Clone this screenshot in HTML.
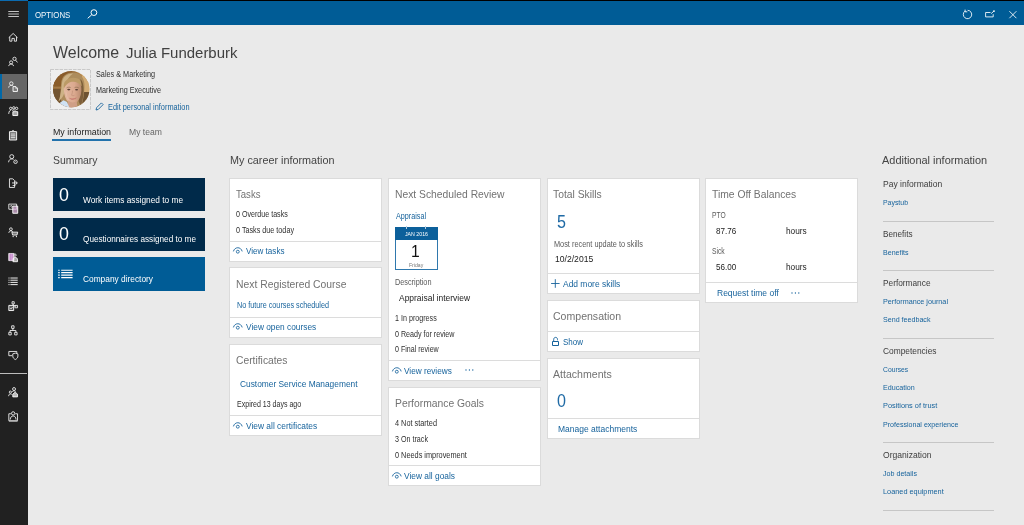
<!DOCTYPE html>
<html lang="en"><head><meta charset="utf-8"><title>Employee self service</title>
<style>
html,body{margin:0;padding:0}
body{width:1024px;height:525px;overflow:hidden;position:relative;background:#eaeaea;font-family:"Liberation Sans",sans-serif}
.t{position:absolute;display:inline-block;transform-origin:0 50%;white-space:pre;font-family:"Liberation Sans",sans-serif}
.b{position:absolute;box-sizing:border-box}
.card{position:absolute;box-sizing:border-box;background:#fff;border:1px solid #dbdbdb}
.hr{position:absolute;height:1px;background:#dcdcdc}
.sep{position:absolute;height:1px;background:#c6c6c6;left:883px;width:111px}
svg{position:absolute;overflow:visible}

</style></head>
<body>
<!-- top strip + header -->
<div class="b" style="left:0;top:0;width:1024px;height:1px;background:#000"></div>
<div class="b" style="left:0;top:0;width:28px;height:1px;background:#0b6bb0"></div>
<div class="b" style="left:28px;top:1px;width:996px;height:24.4px;background:#005c96"></div>
<!-- sidebar -->
<div class="b" style="left:0;top:1px;width:28px;height:524px;background:#212121"></div>
<div class="b" style="left:0;top:74px;width:27px;height:25px;background:#666666;border-left:2px solid #0068a8"></div>
<div class="b" style="left:0;top:373px;width:27px;height:1px;background:#bdbdbd"></div>
<!-- hamburger -->
<svg style="left:8px;top:10px" width="12" height="8" viewBox="0 0 12 8"><path d="M0.3 1.5h10.6M0.3 4h10.6M0.3 6.5h10.6" stroke="#e0e0e0" stroke-width="0.85" fill="none"/></svg>
<!-- search icon -->
<svg style="left:87px;top:9px" width="11" height="10" viewBox="0 0 11 10"><circle cx="6.9" cy="3.6" r="2.9" fill="none" stroke="#fff" stroke-width="1"/><path d="M4.7 5.8L0.7 9.3" stroke="#fff" stroke-width="1" fill="none"/></svg>
<!-- header right icons -->
<svg style="left:962px;top:9px" width="11" height="11" viewBox="0 0 11 11"><path d="M3.2 2.0A4.2 4.2 0 1 0 5.6 1.3" fill="none" stroke="#fff" stroke-width="0.85"/><path d="M3.1 0.6v2.2h2.2" fill="none" stroke="#fff" stroke-width="0.9"/></svg>
<svg style="left:985px;top:10px" width="11" height="8" viewBox="0 0 11 8"><path d="M5.5 2.5H0.6v4.4h7.6V4.2" fill="none" stroke="#fff" stroke-width="0.85"/><path d="M6.2 3.6L8.8 1.2" stroke="#fff" stroke-width="0.9"/><circle cx="9" cy="1.1" r="0.9" fill="#fff"/></svg>
<svg style="left:1009px;top:11px" width="8" height="8" viewBox="0 0 8 8"><path d="M0.4 0.2L7.4 7.2M7.4 0.2L0.4 7.2" stroke="#fff" stroke-width="0.85" fill="none"/></svg>
<!-- avatar -->
<svg style="left:50px;top:69px" width="41" height="41" viewBox="0 0 41 41"><rect x="0.5" y="0.5" width="40" height="40" fill="#efefef" stroke="#bcbcbc" stroke-width="0.75" stroke-dasharray="3.6 0.9"/></svg>
<svg style="left:52.5px;top:71.2px" width="36.5" height="36.5" viewBox="0 0 36.5 36.5">
<defs><clipPath id="av"><circle cx="18.25" cy="18.25" r="18.2"/></clipPath><filter id="bl" x="-20%" y="-20%" width="140%" height="140%"><feGaussianBlur stdDeviation="0.75"/></filter><filter id="bl2" x="-20%" y="-20%" width="140%" height="140%"><feGaussianBlur stdDeviation="0.35"/></filter>
<linearGradient id="bgav" x1="0" y1="0" x2="1" y2="0"><stop offset="0" stop-color="#80531f"/><stop offset="0.45" stop-color="#8a5c2c"/><stop offset="0.8" stop-color="#b98a4c"/><stop offset="1" stop-color="#c9a063"/></linearGradient>
<linearGradient id="skin" x1="0" y1="0" x2="1" y2="0"><stop offset="0" stop-color="#e2b8a0"/><stop offset="0.6" stop-color="#dba98f"/><stop offset="1" stop-color="#b98a6e"/></linearGradient></defs>
<g clip-path="url(#av)"><rect width="36.5" height="36.5" fill="url(#bgav)"/>
<g filter="url(#bl)">
<rect x="-2" y="0" width="12" height="15" fill="#8a5c2a"/>
<rect x="-2" y="15.5" width="12" height="2.2" fill="#a37a48"/>
<rect x="-2" y="18" width="13" height="14" fill="#735430"/>
<rect x="29" y="4" width="9" height="17" fill="#d2ac74"/>
<rect x="27" y="21" width="12" height="17" fill="#6e5232"/>
<path d="M8 14C8 4 15 1.2 21 1.6C28 2 32 8 31.5 16C31.2 22 30.5 28 29 33L24 36L9 31C6 27 8 20 8 14z" fill="#ad8c5c"/>
<path d="M9 12C10 5 15 2.4 20 2.6C17 5 13 9 12.4 16C12 22 10 27 5.5 30.5C7.5 25 8.4 18 9 12z" fill="#cdb286"/>
<path d="M27.5 8C30.5 11 31 17 30.4 23C30 28 29 32 27.6 35L25.5 30C27 24 27.6 15 27.5 8z" fill="#7d5f3a"/>
<path d="M10.8 18.5C10.4 12 14.4 8.6 19.8 8.8C25.2 9 28.8 12.6 28.4 19.4C28.1 25 26 29.6 22.8 32.2C20.8 33.6 17.6 33.2 15.4 31.2C12.6 28.6 11 24 10.8 18.5z" fill="url(#skin)"/>
<path d="M11.6 11C14.5 6.6 21 5.6 25.4 7.8C27.6 9.2 28.8 12 28.6 15.4C26.4 11.6 22.4 10.2 18.6 10.8C15.4 11.4 12.8 13.6 10.8 17.6C10.6 15 10.8 12.8 11.6 11z" fill="#bb9a66"/>
<path d="M15.5 29C17 31.6 21 32.4 23.6 30L24.5 37H14z" fill="#cf9f86"/>
<path d="M4.5 33.5L10.5 29.2L14 31L17 38H3z" fill="#cfe1f3"/>
</g>
<g filter="url(#bl2)">
<path d="M13.6 16.9C14.8 16 16.6 16 17.6 16.6" stroke="#8a6a4e" stroke-width="0.7" fill="none"/>
<path d="M21.6 16.6C22.8 16 24.8 16.1 25.8 17" stroke="#8a6a4e" stroke-width="0.7" fill="none"/>
<ellipse cx="15.8" cy="18.6" rx="1.6" ry="0.8" fill="#5a4034"/>
<ellipse cx="23.6" cy="18.8" rx="1.6" ry="0.8" fill="#5a4034"/>
<path d="M19.6 19.6C19.4 21.8 19 23.2 18.6 24.2C19.4 24.8 20.6 24.8 21.6 24.2" stroke="#c08f78" stroke-width="0.7" fill="none"/>
<path d="M16.4 27.2C18.4 28 21.4 28 23.4 26.8C22.2 28.8 18.2 29 16.4 27.2z" fill="#c4766c" stroke="#c4766c" stroke-width="0.4"/>
<path d="M13 20.5C13 24 14.4 27.6 16 29.6" stroke="#e8c2aa" stroke-width="0.8" fill="none"/>
</g></g></svg>
<!-- edit pencil -->
<svg style="left:95px;top:102px" width="9" height="9" viewBox="0 0 9 9"><path d="M1 8l0.6-2.3L6.4 0.9l1.7 1.7L3.3 7.4z" fill="none" stroke="#17639c" stroke-width="0.9"/></svg>
<!-- tab underline -->
<div class="b" style="left:52.4px;top:139.4px;width:58.2px;height:1.8px;background:#2272ac"></div>
<!-- tiles -->
<div class="b" style="left:52.5px;top:178px;width:152.5px;height:33.3px;background:#002a4a"></div>
<div class="b" style="left:52.5px;top:218px;width:152.5px;height:32.8px;background:#002a4a"></div>
<div class="b" style="left:52.5px;top:257.2px;width:152.5px;height:33.5px;background:#005c96"></div>
<svg style="left:57.8px;top:268.9px" width="15" height="10" viewBox="0 0 15 10"><path d="M3.2 1.2h11.4M3.2 3.65h11.4M3.2 6.1h11.4M3.2 8.55h11.4" stroke="#fff" stroke-width="1.15"/><path d="M0.2 1.2h1.5M0.2 3.65h1.5M0.2 6.1h1.5M0.2 8.55h1.5" stroke="#fff" stroke-width="1.15"/></svg>
<!-- cards col1 -->
<div class="card" style="left:229px;top:178px;width:153px;height:84px"></div><div class="hr" style="left:230px;top:241px;width:151px"></div>
<div class="card" style="left:229px;top:267px;width:153px;height:71px"></div><div class="hr" style="left:230px;top:317px;width:151px"></div>
<div class="card" style="left:229px;top:344px;width:153px;height:92px"></div><div class="hr" style="left:230px;top:415px;width:151px"></div>
<!-- cards col2 -->
<div class="card" style="left:388px;top:178px;width:153px;height:203px"></div><div class="hr" style="left:389px;top:360px;width:151px"></div>
<div class="card" style="left:388px;top:387px;width:153px;height:99px"></div><div class="hr" style="left:389px;top:465px;width:151px"></div>
<!-- cards col3 -->
<div class="card" style="left:547px;top:178px;width:153px;height:116px"></div><div class="hr" style="left:548px;top:273px;width:151px"></div>
<div class="card" style="left:547px;top:300px;width:153px;height:52px"></div><div class="hr" style="left:548px;top:331px;width:151px"></div>
<div class="card" style="left:547px;top:358px;width:153px;height:81px"></div><div class="hr" style="left:548px;top:418px;width:151px"></div>
<!-- cards col4 -->
<div class="card" style="left:705px;top:178px;width:153px;height:125px"></div><div class="hr" style="left:706px;top:282px;width:151px"></div>
<!-- calendar -->
<div class="b" style="left:395px;top:227px;width:43px;height:43px;background:#fff;border:1px solid #2f78ad"></div>
<div class="b" style="left:395px;top:227px;width:43px;height:12.7px;background:#0c609b"></div>
<div class="b" style="left:406.3px;top:225.6px;width:1px;height:3.6px;background:#b9d0e3"></div>
<div class="b" style="left:425.2px;top:225.6px;width:1px;height:3.6px;background:#b9d0e3"></div>
<!-- right separators -->
<div class="sep" style="top:220.6px"></div>
<div class="sep" style="top:270px"></div>
<div class="sep" style="top:337.8px"></div>
<div class="sep" style="top:441.8px"></div>
<div class="sep" style="top:509.8px"></div>
<svg style="left:7.8px;top:32.3px" width="11" height="11" viewBox="0 0 12 12"><path d="M0.8 6.2L5.6 1.6L10.4 6.2" stroke="#f4f4f4" stroke-width="0.95" fill="none"/><path d="M1.9 5.4V10H4.3V7H6.9V10H9.3V5.4" stroke="#f4f4f4" stroke-width="0.95" fill="none"/></svg>
<svg style="left:7.8px;top:56.3px" width="11" height="11" viewBox="0 0 12 12"><circle cx="7.1" cy="3.1" r="1.8" stroke="#f4f4f4" stroke-width="0.95" fill="none"/><path d="M8.4 4.6L10.3 7" stroke="#f4f4f4" stroke-width="0.95" fill="none"/><circle cx="3.4" cy="7" r="1.7" stroke="#f4f4f4" stroke-width="0.95" fill="none"/><path d="M0.8 11C1.2 9 2.3 8.8 3.4 8.8C4.5 8.8 5.6 9 6 11" stroke="#f4f4f4" stroke-width="0.95" fill="none"/></svg>
<svg style="left:7.8px;top:81.1px" width="11" height="11" viewBox="0 0 12 12"><circle cx="3.6" cy="2.8" r="1.9" stroke="#f4f4f4" stroke-width="0.95" fill="none"/><path d="M0.7 7.2C1 5.4 2.2 4.8 3.6 4.8C4.6 4.8 5.2 5 5.6 5.4" stroke="#f4f4f4" stroke-width="0.95" fill="none"/><path d="M5.5 6.1H8.6L10.3 7.8V11.4H5.5z" fill="#fff" fill-opacity="0.12" stroke="#fff" stroke-width="1"/><path d="M8.4 6.3V8H10.1" fill="none" stroke="#fff" stroke-width="0.7"/></svg>
<svg style="left:7.8px;top:105.6px" width="11" height="11" viewBox="0 0 12 12"><circle cx="3" cy="2.6" r="1.3" stroke="#f4f4f4" stroke-width="0.95" fill="none"/><circle cx="6.3" cy="2" r="1.3" stroke="#f4f4f4" stroke-width="0.95" fill="none"/><circle cx="9.4" cy="2.6" r="1.3" stroke="#f4f4f4" stroke-width="0.95" fill="none"/><path d="M0.8 8.6C1 5.6 2 4.6 3.4 4.6M4.4 5C5.4 4 7.2 4 8.2 5" stroke="#f4f4f4" stroke-width="0.95" fill="none"/><path d="M5.3 6.2H10.6V10.4H5.3z" fill="#fff" fill-opacity="0.6" stroke="#fff" stroke-width="1"/></svg>
<svg style="left:7.8px;top:129.7px" width="11" height="11" viewBox="0 0 12 12"><path d="M1.6 1.8H9.4V10.9H1.6z" fill="#fff" fill-opacity="0.35" stroke="#fff" stroke-width="1"/><path d="M4 1.6L5.5 0.4L7 1.6" stroke="#f4f4f4" stroke-width="0.95" fill="none"/><path d="M3 4.4H8M3 6.4H8M3 8.4H8" stroke="#fff" stroke-width="0.9"/></svg>
<svg style="left:7.8px;top:154.0px" width="11" height="11" viewBox="0 0 12 12"><circle cx="4.1" cy="2.9" r="2.2" stroke="#f4f4f4" stroke-width="0.95" fill="none"/><path d="M0.6 9C0.9 6.4 2.4 5.4 4.1 5.4C4.9 5.4 5.5 5.6 6 5.9" stroke="#f4f4f4" stroke-width="0.95" fill="none"/><circle cx="8.2" cy="8.5" r="1.9" stroke="#f4f4f4" stroke-width="0.95" fill="none"/><circle cx="8.2" cy="8.5" r="0.5" fill="#fff"/></svg>
<svg style="left:7.8px;top:178.3px" width="11" height="11" viewBox="0 0 12 12"><path d="M1.6 0.9H5.2L7.2 2.9V10.3H1.6z" stroke="#f4f4f4" stroke-width="0.95" fill="none"/><path d="M4.4 5.4H10M8 3.4L10.2 5.4L8 7.4" stroke="#f4f4f4" stroke-width="0.95" fill="none"/><path d="M5 8.2H8" stroke="#fff" stroke-width="0.8"/></svg>
<svg style="left:7.8px;top:202.9px" width="11" height="11" viewBox="0 0 12 12"><path d="M0.9 1.2H9.4V6.8H0.9z" stroke="#f4f4f4" stroke-width="0.95" fill="none"/><path d="M5.2 3.4H10.6V11.2H5.2z" fill="#d8b0d8" fill-opacity="0.75" stroke="#fff" stroke-width="1"/><path d="M2.6 3.8A1 1 0 1 1 3.8 4.8" stroke="#f4f4f4" stroke-width="0.95" fill="none"/></svg>
<svg style="left:7.8px;top:227.3px" width="11" height="11" viewBox="0 0 12 12"><circle cx="3.2" cy="2.4" r="1.5" stroke="#f4f4f4" stroke-width="0.95" fill="none"/><path d="M0.9 6.4C1.1 4.8 2 4.2 3.2 4.2C4.2 4.2 4.8 4.6 5.2 5.2" stroke="#f4f4f4" stroke-width="0.95" fill="none"/><path d="M4.2 5.6H10.6L9.8 8.8H5z" fill="#fff" fill-opacity="0.4" stroke="#fff" stroke-width="0.9"/><circle cx="5.6" cy="10.4" r="0.7" fill="#fff"/><circle cx="9.2" cy="10.4" r="0.7" fill="#fff"/></svg>
<svg style="left:7.8px;top:251.9px" width="11" height="11" viewBox="0 0 12 12"><path d="M0.8 1.6H6.4V9.4H0.8z" fill="#d9a6dc" stroke="#fff" stroke-width="0.8"/><path d="M2.7 1.6V9.4M4.6 1.6V9.4" stroke="#b77fc0" stroke-width="0.6"/><circle cx="7.6" cy="3.4" r="1.3" stroke="#f4f4f4" stroke-width="0.95" fill="none"/><path d="M5.4 10.6V8.6C5.4 6.6 6.4 6 7.8 6C9.2 6 10.4 6.6 10.4 8.6V10.6z" fill="#fff" fill-opacity="0.6" stroke="#fff" stroke-width="0.9"/></svg>
<svg style="left:7.8px;top:275.9px" width="11" height="11" viewBox="0 0 12 12"><path d="M2.6 2.2H10.6M2.6 4.6H10.6M2.6 7H10.6M2.6 9.4H10.6" stroke="#fff" stroke-width="1"/><path d="M0.5 2.2H1.7M0.5 4.6H1.7M0.5 7H1.7M0.5 9.4H1.7" stroke="#fff" stroke-width="1"/></svg>
<svg style="left:7.8px;top:300.6px" width="11" height="11" viewBox="0 0 12 12"><path d="M4.4 0.8H6.8V3.2H4.4z" stroke="#f4f4f4" stroke-width="0.95" fill="none"/><path d="M5.6 3.2V4.6M5.6 4.6L9 5.6" stroke="#f4f4f4" stroke-width="0.95" fill="none"/><path d="M0.9 4.8H6.2V10.4H0.9z" fill="#fff" fill-opacity="0.25" stroke="#fff" stroke-width="1"/><path d="M7.6 4.8H10.4V7.4H7.6z" stroke="#f4f4f4" stroke-width="0.95" fill="none"/><path d="M2.2 7.8L3.2 8.8L5 6.6" stroke="#fff" stroke-width="0.8" fill="none"/></svg>
<svg style="left:7.8px;top:324.7px" width="11" height="11" viewBox="0 0 12 12"><path d="M4 0.9H6.6V3.7H4z" stroke="#f4f4f4" stroke-width="0.95" fill="none"/><path d="M5.3 3.7V6M2.2 8V6H8.6V8" stroke="#f4f4f4" stroke-width="0.95" fill="none"/><path d="M0.9 8H3.5V10.8H0.9zM7.3 8H9.9V10.8H7.3z" stroke="#f4f4f4" stroke-width="0.95" fill="none"/></svg>
<svg style="left:7.8px;top:349.9px" width="11" height="11" viewBox="0 0 12 12"><path d="M4.4 6.2H0.9V1.6H9.6V3.4" stroke="#f4f4f4" stroke-width="0.95" fill="none"/><path d="M5.2 4.2L8 3.4L10.8 4.2V6.6C10.8 8.4 9.6 9.6 8 10.4C6.4 9.6 5.2 8.4 5.2 6.6z" stroke="#f4f4f4" stroke-width="0.95" fill="none"/></svg>
<svg style="left:7.8px;top:386.5px" width="11" height="11" viewBox="0 0 12 12"><circle cx="6.6" cy="2.2" r="1.6" stroke="#f4f4f4" stroke-width="0.95" fill="none"/><circle cx="2.6" cy="5.6" r="1.2" stroke="#f4f4f4" stroke-width="0.95" fill="none"/><path d="M0.7 10C0.8 8.2 1.6 7.6 2.6 7.6C3.4 7.6 3.8 7.8 4.2 8.2" stroke="#f4f4f4" stroke-width="0.95" fill="none"/><path d="M4.4 5.4C5 4.4 5.8 4.2 6.6 4.2C7.4 4.2 8 4.4 8.4 4.8" stroke="#f4f4f4" stroke-width="0.95" fill="none"/><path d="M5.2 10.8V7.8L7.8 5.6L10.4 7.8V10.8z" fill="#fff" fill-opacity="0.7" stroke="#fff" stroke-width="0.9"/></svg>
<svg style="left:7.8px;top:411.0px" width="11" height="11" viewBox="0 0 12 12"><path d="M3.2 3H0.9V10.6H10.4V3H8" stroke="#f4f4f4" stroke-width="0.95" fill="none"/><circle cx="5.6" cy="2.6" r="1.8" stroke="#f4f4f4" stroke-width="0.95" fill="none"/><path d="M2.4 9.4C2.6 6.6 4 5.4 5.6 5.4C7.2 5.4 8.6 6.6 8.8 9.4" stroke="#f4f4f4" stroke-width="0.95" fill="none"/><path d="M1 11.3H10.4" stroke="#bbb" stroke-width="0.9"/></svg>
<svg style="left:233.4px;top:246.8px" width="10" height="7" viewBox="0 0 10 7"><path d="M0.4 4.4C1.8 -0.5 7.8 -0.5 9.2 4.4" fill="none" stroke="#17639c" stroke-width="0.9"/><circle cx="4.8" cy="4.7" r="1.45" fill="none" stroke="#17639c" stroke-width="0.85"/></svg>
<svg style="left:233.4px;top:323.2px" width="10" height="7" viewBox="0 0 10 7"><path d="M0.4 4.4C1.8 -0.5 7.8 -0.5 9.2 4.4" fill="none" stroke="#17639c" stroke-width="0.9"/><circle cx="4.8" cy="4.7" r="1.45" fill="none" stroke="#17639c" stroke-width="0.85"/></svg>
<svg style="left:233.4px;top:421.5px" width="10" height="7" viewBox="0 0 10 7"><path d="M0.4 4.4C1.8 -0.5 7.8 -0.5 9.2 4.4" fill="none" stroke="#17639c" stroke-width="0.9"/><circle cx="4.8" cy="4.7" r="1.45" fill="none" stroke="#17639c" stroke-width="0.85"/></svg>
<svg style="left:391.8px;top:366.7px" width="10" height="7" viewBox="0 0 10 7"><path d="M0.4 4.4C1.8 -0.5 7.8 -0.5 9.2 4.4" fill="none" stroke="#17639c" stroke-width="0.9"/><circle cx="4.8" cy="4.7" r="1.45" fill="none" stroke="#17639c" stroke-width="0.85"/></svg>
<svg style="left:391.8px;top:472.1px" width="10" height="7" viewBox="0 0 10 7"><path d="M0.4 4.4C1.8 -0.5 7.8 -0.5 9.2 4.4" fill="none" stroke="#17639c" stroke-width="0.9"/><circle cx="4.8" cy="4.7" r="1.45" fill="none" stroke="#17639c" stroke-width="0.85"/></svg>
<svg style="left:551px;top:279px" width="9" height="9" viewBox="0 0 9 9"><path d="M4.3 0.2V8.8M0.1 4.5H8.6" stroke="#17639c" stroke-width="0.9" fill="none"/></svg>
<svg style="left:551px;top:336px" width="9" height="11" viewBox="0 0 9 11"><path d="M1.5 5.5H7.5V9.5H1.5z" fill="none" stroke="#17639c" stroke-width="1"/><path d="M2.7 5.5V3.4C2.7 0.7 6.5 0.7 6.5 3.4V4.3" fill="none" stroke="#17639c" stroke-width="0.95"/></svg>
<svg style="left:464.6px;top:369.3px" width="9" height="2" viewBox="0 0 9 2"><circle cx="1" cy="1" r="0.65" fill="#17639c"/><circle cx="4.4" cy="1" r="0.65" fill="#17639c"/><circle cx="7.8" cy="1" r="0.65" fill="#17639c"/></svg>
<svg style="left:791px;top:291.8px" width="9" height="2" viewBox="0 0 9 2"><circle cx="1" cy="1" r="0.65" fill="#17639c"/><circle cx="4.4" cy="1" r="0.65" fill="#17639c"/><circle cx="7.8" cy="1" r="0.65" fill="#17639c"/></svg>

<span class="t" style="left:35.00px;top:10.00px;font-size:9.7px;line-height:9.7px;color:#f4f8fb;transform:scaleX(0.8095);">OPTIONS</span>
<span class="t" style="left:52.90px;top:44.00px;font-size:17.4px;line-height:17.4px;color:#414141;transform:scaleX(0.9173);">Welcome</span>
<span class="t" style="left:126.30px;top:45.00px;font-size:15.4px;line-height:15.4px;color:#414141;transform:scaleX(0.9726);">Julia Funderburk</span>
<span class="t" style="left:95.50px;top:71.00px;font-size:8.2px;line-height:8.2px;color:#2f2f2f;transform:scaleX(0.8878);">Sales &amp; Marketing</span>
<span class="t" style="left:95.50px;top:87.00px;font-size:8.2px;line-height:8.2px;color:#2f2f2f;transform:scaleX(0.8815);">Marketing Executive</span>
<span class="t" style="left:108.30px;top:104.00px;font-size:8.2px;line-height:8.2px;color:#17639c;transform:scaleX(0.8998);">Edit personal information</span>
<span class="t" style="left:52.70px;top:128.00px;font-size:9.3px;line-height:9.3px;color:#222222;transform:scaleX(0.9513);">My information</span>
<span class="t" style="left:129.00px;top:128.00px;font-size:9.3px;line-height:9.3px;color:#666666;transform:scaleX(0.9255);">My team</span>
<span class="t" style="left:52.50px;top:155.00px;font-size:11.3px;line-height:11.3px;color:#444444;transform:scaleX(0.9205);">Summary</span>
<span class="t" style="left:229.50px;top:155.00px;font-size:11.3px;line-height:11.3px;color:#444444;transform:scaleX(0.9565);">My career information</span>
<span class="t" style="left:882.40px;top:155.00px;font-size:11.3px;line-height:11.3px;color:#444444;transform:scaleX(0.9683);">Additional information</span>
<span class="t" style="left:58.70px;top:187.00px;font-size:17.5px;line-height:17.5px;color:#ffffff;transform:scaleX(1.0200);">0</span>
<span class="t" style="left:83.00px;top:196.00px;font-size:8.8px;line-height:8.8px;color:#ffffff;transform:scaleX(0.9440);">Work items assigned to me</span>
<span class="t" style="left:58.70px;top:226.00px;font-size:17.5px;line-height:17.5px;color:#ffffff;transform:scaleX(1.0200);">0</span>
<span class="t" style="left:83.00px;top:235.00px;font-size:8.8px;line-height:8.8px;color:#ffffff;transform:scaleX(0.9317);">Questionnaires assigned to me</span>
<span class="t" style="left:83.00px;top:275.00px;font-size:8.8px;line-height:8.8px;color:#ffffff;transform:scaleX(0.9481);">Company directory</span>
<span class="t" style="left:235.80px;top:189.00px;font-size:11px;line-height:11px;color:#727272;transform:scaleX(0.8711);">Tasks</span>
<span class="t" style="left:236.00px;top:211.00px;font-size:8.2px;line-height:8.2px;color:#2f2f2f;transform:scaleX(0.8679);">0 Overdue tasks</span>
<span class="t" style="left:236.00px;top:227.00px;font-size:8.2px;line-height:8.2px;color:#2f2f2f;transform:scaleX(0.8807);">0 Tasks due today</span>
<span class="t" style="left:245.50px;top:247.00px;font-size:9px;line-height:9px;color:#17639c;transform:scaleX(0.8983);">View tasks</span>
<span class="t" style="left:235.80px;top:279.00px;font-size:11px;line-height:11px;color:#727272;transform:scaleX(0.9413);">Next Registered Course</span>
<span class="t" style="left:237.00px;top:302.00px;font-size:8.2px;line-height:8.2px;color:#17639c;transform:scaleX(0.8826);">No future courses scheduled</span>
<span class="t" style="left:245.50px;top:323.00px;font-size:9px;line-height:9px;color:#17639c;transform:scaleX(0.9250);">View open courses</span>
<span class="t" style="left:235.80px;top:355.00px;font-size:11px;line-height:11px;color:#727272;transform:scaleX(0.9358);">Certificates</span>
<span class="t" style="left:240.00px;top:380.00px;font-size:9px;line-height:9px;color:#17639c;transform:scaleX(0.9284);">Customer Service Management</span>
<span class="t" style="left:236.50px;top:401.00px;font-size:8.2px;line-height:8.2px;color:#2f2f2f;transform:scaleX(0.8599);">Expired 13 days ago</span>
<span class="t" style="left:245.50px;top:422.00px;font-size:9px;line-height:9px;color:#17639c;transform:scaleX(0.9322);">View all certificates</span>
<span class="t" style="left:394.70px;top:189.00px;font-size:11px;line-height:11px;color:#727272;transform:scaleX(0.9375);">Next Scheduled Review</span>
<span class="t" style="left:395.50px;top:213.00px;font-size:8.2px;line-height:8.2px;color:#17639c;transform:scaleX(0.8787);">Appraisal</span>
<span class="t" style="left:404.80px;top:231.00px;font-size:6.2px;line-height:6.2px;color:#ffffff;transform:scaleX(0.8460);">JAN 2016</span>
<span class="t" style="left:410.80px;top:243.00px;font-size:17px;line-height:17px;color:#111111;transform:scaleX(0.9200);">1</span>
<span class="t" style="left:409.00px;top:262.00px;font-size:6.2px;line-height:6.2px;color:#777777;transform:scaleX(0.8254);">Friday</span>
<span class="t" style="left:395.00px;top:278.00px;font-size:8.6px;line-height:8.6px;color:#5a5a5a;transform:scaleX(0.8488);">Description</span>
<span class="t" style="left:399.00px;top:294.00px;font-size:9px;line-height:9px;color:#222222;transform:scaleX(0.9398);">Appraisal interview</span>
<span class="t" style="left:395.00px;top:315.00px;font-size:8.2px;line-height:8.2px;color:#2f2f2f;transform:scaleX(0.8735);">1 In progress</span>
<span class="t" style="left:395.00px;top:331.00px;font-size:8.2px;line-height:8.2px;color:#2f2f2f;transform:scaleX(0.8716);">0 Ready for review</span>
<span class="t" style="left:395.00px;top:346.00px;font-size:8.2px;line-height:8.2px;color:#2f2f2f;transform:scaleX(0.8661);">0 Final review</span>
<span class="t" style="left:404.25px;top:367.00px;font-size:9px;line-height:9px;color:#17639c;transform:scaleX(0.9120);">View reviews</span>
<span class="t" style="left:394.50px;top:398.00px;font-size:11px;line-height:11px;color:#727272;transform:scaleX(0.9392);">Performance Goals</span>
<span class="t" style="left:395.00px;top:420.00px;font-size:8.2px;line-height:8.2px;color:#2f2f2f;transform:scaleX(0.8960);">4 Not started</span>
<span class="t" style="left:395.00px;top:436.00px;font-size:8.2px;line-height:8.2px;color:#2f2f2f;transform:scaleX(0.8734);">3 On track</span>
<span class="t" style="left:395.00px;top:452.00px;font-size:8.2px;line-height:8.2px;color:#2f2f2f;transform:scaleX(0.8958);">0 Needs improvement</span>
<span class="t" style="left:404.00px;top:472.00px;font-size:9px;line-height:9px;color:#17639c;transform:scaleX(0.9294);">View all goals</span>
<span class="t" style="left:553.20px;top:189.00px;font-size:11px;line-height:11px;color:#727272;transform:scaleX(0.9381);">Total Skills</span>
<span class="t" style="left:557.30px;top:214.00px;font-size:17.5px;line-height:17.5px;color:#1f6aa5;transform:scaleX(0.9200);">5</span>
<span class="t" style="left:554.00px;top:240.00px;font-size:8.6px;line-height:8.6px;color:#5a5a5a;transform:scaleX(0.8546);">Most recent update to skills</span>
<span class="t" style="left:554.75px;top:255.00px;font-size:9px;line-height:9px;color:#222222;transform:scaleX(0.9551);">10/2/2015</span>
<span class="t" style="left:563.00px;top:280.00px;font-size:9px;line-height:9px;color:#17639c;transform:scaleX(0.9380);">Add more skills</span>
<span class="t" style="left:553.20px;top:311.00px;font-size:11px;line-height:11px;color:#727272;transform:scaleX(0.9586);">Compensation</span>
<span class="t" style="left:563.00px;top:338.00px;font-size:9px;line-height:9px;color:#17639c;transform:scaleX(0.8883);">Show</span>
<span class="t" style="left:553.20px;top:369.00px;font-size:11px;line-height:11px;color:#727272;transform:scaleX(0.9609);">Attachments</span>
<span class="t" style="left:556.80px;top:393.00px;font-size:17.5px;line-height:17.5px;color:#1f6aa5;transform:scaleX(0.9200);">0</span>
<span class="t" style="left:558.00px;top:425.00px;font-size:9px;line-height:9px;color:#17639c;transform:scaleX(0.9433);">Manage attachments</span>
<span class="t" style="left:711.70px;top:189.00px;font-size:11px;line-height:11px;color:#727272;transform:scaleX(0.9374);">Time Off Balances</span>
<span class="t" style="left:712.20px;top:211.00px;font-size:8.6px;line-height:8.6px;color:#5a5a5a;transform:scaleX(0.7800);">PTO</span>
<span class="t" style="left:715.75px;top:227.00px;font-size:9px;line-height:9px;color:#222222;transform:scaleX(0.8988);">87.76</span>
<span class="t" style="left:786.25px;top:227.00px;font-size:9px;line-height:9px;color:#222222;transform:scaleX(0.9216);">hours</span>
<span class="t" style="left:712.20px;top:247.00px;font-size:8.6px;line-height:8.6px;color:#5a5a5a;transform:scaleX(0.7800);">Sick</span>
<span class="t" style="left:715.75px;top:263.00px;font-size:9px;line-height:9px;color:#222222;transform:scaleX(0.8988);">56.00</span>
<span class="t" style="left:786.25px;top:263.00px;font-size:9px;line-height:9px;color:#222222;transform:scaleX(0.9216);">hours</span>
<span class="t" style="left:716.75px;top:289.00px;font-size:9px;line-height:9px;color:#17639c;transform:scaleX(0.9446);">Request time off</span>
<span class="t" style="left:882.50px;top:180.00px;font-size:9.3px;line-height:9.3px;color:#3c3c3c;transform:scaleX(0.9173);">Pay information</span>
<span class="t" style="left:883.00px;top:199.00px;font-size:7.8px;line-height:7.8px;color:#17639c;transform:scaleX(0.8869);">Paystub</span>
<span class="t" style="left:882.50px;top:230.00px;font-size:9.3px;line-height:9.3px;color:#3c3c3c;transform:scaleX(0.8781);">Benefits</span>
<span class="t" style="left:883.00px;top:249.00px;font-size:7.8px;line-height:7.8px;color:#17639c;transform:scaleX(0.9047);">Benefits</span>
<span class="t" style="left:882.50px;top:279.00px;font-size:9.3px;line-height:9.3px;color:#3c3c3c;transform:scaleX(0.8923);">Performance</span>
<span class="t" style="left:883.00px;top:298.00px;font-size:7.8px;line-height:7.8px;color:#17639c;transform:scaleX(0.9257);">Performance journal</span>
<span class="t" style="left:883.00px;top:316.00px;font-size:7.8px;line-height:7.8px;color:#17639c;transform:scaleX(0.9129);">Send feedback</span>
<span class="t" style="left:882.50px;top:347.00px;font-size:9.3px;line-height:9.3px;color:#3c3c3c;transform:scaleX(0.9001);">Competencies</span>
<span class="t" style="left:883.00px;top:366.00px;font-size:7.8px;line-height:7.8px;color:#17639c;transform:scaleX(0.8693);">Courses</span>
<span class="t" style="left:883.00px;top:384.00px;font-size:7.8px;line-height:7.8px;color:#17639c;transform:scaleX(0.9153);">Education</span>
<span class="t" style="left:883.00px;top:402.00px;font-size:7.8px;line-height:7.8px;color:#17639c;transform:scaleX(0.9412);">Positions of trust</span>
<span class="t" style="left:883.00px;top:421.00px;font-size:7.8px;line-height:7.8px;color:#17639c;transform:scaleX(0.9072);">Professional experience</span>
<span class="t" style="left:882.50px;top:451.00px;font-size:9.3px;line-height:9.3px;color:#3c3c3c;transform:scaleX(0.9200);">Organization</span>
<span class="t" style="left:883.00px;top:470.00px;font-size:7.8px;line-height:7.8px;color:#17639c;transform:scaleX(0.9120);">Job details</span>
<span class="t" style="left:883.00px;top:488.00px;font-size:7.8px;line-height:7.8px;color:#17639c;transform:scaleX(0.9403);">Loaned equipment</span>
</body></html>
